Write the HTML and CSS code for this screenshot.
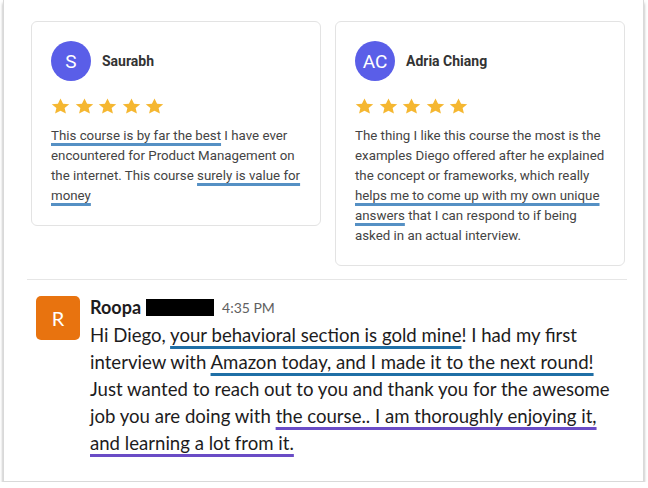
FILE: index.html
```html
<!DOCTYPE html>
<html>
<head>
<meta charset="utf-8">
<link rel="stylesheet" href="styles.css">
</head>
<body>
<div class="frame">
  <div class="cards">
    <div class="card">
      <div class="head"><div class="av">S</div><div class="nm">Saurabh</div></div>
      <div class="stars">
        <svg viewBox="0 0 24 24" preserveAspectRatio="none"><path d="M12 2l2.94 6.47 7.06.75-5.3 4.73 1.5 6.95L12 17.3l-6.2 3.6 1.5-6.95L2 9.22l7.06-.75z"/></svg>
        <svg viewBox="0 0 24 24" preserveAspectRatio="none"><path d="M12 2l2.94 6.47 7.06.75-5.3 4.73 1.5 6.95L12 17.3l-6.2 3.6 1.5-6.95L2 9.22l7.06-.75z"/></svg>
        <svg viewBox="0 0 24 24" preserveAspectRatio="none"><path d="M12 2l2.94 6.47 7.06.75-5.3 4.73 1.5 6.95L12 17.3l-6.2 3.6 1.5-6.95L2 9.22l7.06-.75z"/></svg>
        <svg viewBox="0 0 24 24" preserveAspectRatio="none"><path d="M12 2l2.94 6.47 7.06.75-5.3 4.73 1.5 6.95L12 17.3l-6.2 3.6 1.5-6.95L2 9.22l7.06-.75z"/></svg>
        <svg viewBox="0 0 24 24" preserveAspectRatio="none"><path d="M12 2l2.94 6.47 7.06.75-5.3 4.73 1.5 6.95L12 17.3l-6.2 3.6 1.5-6.95L2 9.22l7.06-.75z"/></svg>
      </div>
      <p class="txt"><span class="ul">This course is by far the best</span> I have ever encountered for Product Management on the internet. This course <span class="ul">surely is value for money</span></p>
    </div>
    <div class="card">
      <div class="head"><div class="av">AC</div><div class="nm">Adria Chiang</div></div>
      <div class="stars">
        <svg viewBox="0 0 24 24" preserveAspectRatio="none"><path d="M12 2l2.94 6.47 7.06.75-5.3 4.73 1.5 6.95L12 17.3l-6.2 3.6 1.5-6.95L2 9.22l7.06-.75z"/></svg>
        <svg viewBox="0 0 24 24" preserveAspectRatio="none"><path d="M12 2l2.94 6.47 7.06.75-5.3 4.73 1.5 6.95L12 17.3l-6.2 3.6 1.5-6.95L2 9.22l7.06-.75z"/></svg>
        <svg viewBox="0 0 24 24" preserveAspectRatio="none"><path d="M12 2l2.94 6.47 7.06.75-5.3 4.73 1.5 6.95L12 17.3l-6.2 3.6 1.5-6.95L2 9.22l7.06-.75z"/></svg>
        <svg viewBox="0 0 24 24" preserveAspectRatio="none"><path d="M12 2l2.94 6.47 7.06.75-5.3 4.73 1.5 6.95L12 17.3l-6.2 3.6 1.5-6.95L2 9.22l7.06-.75z"/></svg>
        <svg viewBox="0 0 24 24" preserveAspectRatio="none"><path d="M12 2l2.94 6.47 7.06.75-5.3 4.73 1.5 6.95L12 17.3l-6.2 3.6 1.5-6.95L2 9.22l7.06-.75z"/></svg>
      </div>
      <p class="txt">The thing I like this course the most is the examples Diego offered after he explained the concept or frameworks, which really <span class="ul">helps me to come up with my own unique answers</span> that I can respond to if being asked in an actual interview.</p>
    </div>
  </div>
  <div class="divider"></div>
  <div class="msg">
    <div class="rav">R</div>
    <div class="mbody">
      <div class="mhead"><span class="mname">Roopa</span><span class="redact"></span><span class="time">4:35 PM</span></div>
      <p class="mtext">Hi Diego, <span class="ub">your behavioral section is gold mine</span>! I had my first interview with <span class="ub">Amazon today, and I made it to the next round!</span> Just wanted to reach out to you and thank you for the awesome job you are doing with <span class="up">the course.. I am thoroughly enjoying it, and learning a lot from it.</span></p>
    </div>
  </div>
</div>
</body>
</html>
```
FILE: styles.css
```css
html, body {
  margin: 0;
  padding: 0;
  background: #ffffff;
}
.frame {
  margin-left: 3px;
  width: 639px;
  height: 460px;
  border: 1px solid #d9d9d9;
  border-top: none;
  box-shadow: 0 3px 3px rgba(0, 0, 0, 0.35);
  background: #fff;
  padding-top: 21px;
  box-sizing: content-box;
}
.cards {
  display: flex;
  align-items: flex-start;
  gap: 14px;
  padding-left: 27px;
}
.card {
  width: 290px;
  box-sizing: border-box;
  border: 1px solid #e3e3e3;
  border-radius: 6px;
  padding: 19px 19px 19px 19px;
  font-family: Roboto, "Liberation Sans", sans-serif;
}
.head {
  display: flex;
  align-items: center;
  gap: 11px;
}
.av {
  width: 40px;
  height: 40px;
  border-radius: 50%;
  background: #5a5ee8;
  color: #fff;
  font-size: 19px;
  display: flex;
  align-items: center;
  justify-content: center;
}
.nm {
  font-size: 14px;
  font-weight: 700;
  color: #333;
}
.stars {
  display: flex;
  gap: 2.5px;
  margin: 16.4px 0 0 -1px;
}
.stars svg {
  width: 21px;
  height: 19px;
  fill: #f5b731;
  display: block;
}
.txt {
  margin: 9.8px 0 0 0;
  font-size: 13.3px;
  line-height: 20px;
  color: #444;
}
.ul {
  text-decoration: underline;
  text-decoration-color: #5590c4;
  text-decoration-thickness: 3px;
  text-underline-offset: 3px;
  text-decoration-skip-ink: none;
}
.divider {
  height: 1px;
  background: #e6e6e6;
  margin: 13px 0 0 23px;
  width: 600px;
}
.msg {
  display: flex;
  gap: 10px;
  padding-left: 32px;
  margin-top: 16px;
  font-family: Lato, "Liberation Sans", sans-serif;
}
.rav {
  width: 44px;
  height: 44px;
  flex: none;
  border-radius: 5px;
  background: #e8730f;
  color: #fff;
  font-size: 20px;
  display: flex;
  align-items: center;
  justify-content: center;
}
.mbody {
  width: 530px;
}
.mhead {
  display: flex;
  align-items: center;
  height: 22px;
}
.mname {
  font-size: 18px;
  font-weight: 700;
  color: #1d1c1d;
}
.redact {
  width: 68px;
  height: 17px;
  background: #000;
  margin-left: 5px;
}
.time {
  font-size: 14px;
  color: #616061;
  margin-left: 8px;
}
.mtext {
  margin: 4px 0 0 0;
  font-size: 18.6px;
  line-height: 27px;
  color: #1d1c1d;
}
.ub, .up {
  text-decoration: underline;
  text-decoration-thickness: 3px;
  text-underline-offset: 4px;
  text-decoration-skip-ink: none;
}
.ub { text-decoration-color: #1f6fa6; }
.up { text-decoration-color: #6a4cc6; }
```
